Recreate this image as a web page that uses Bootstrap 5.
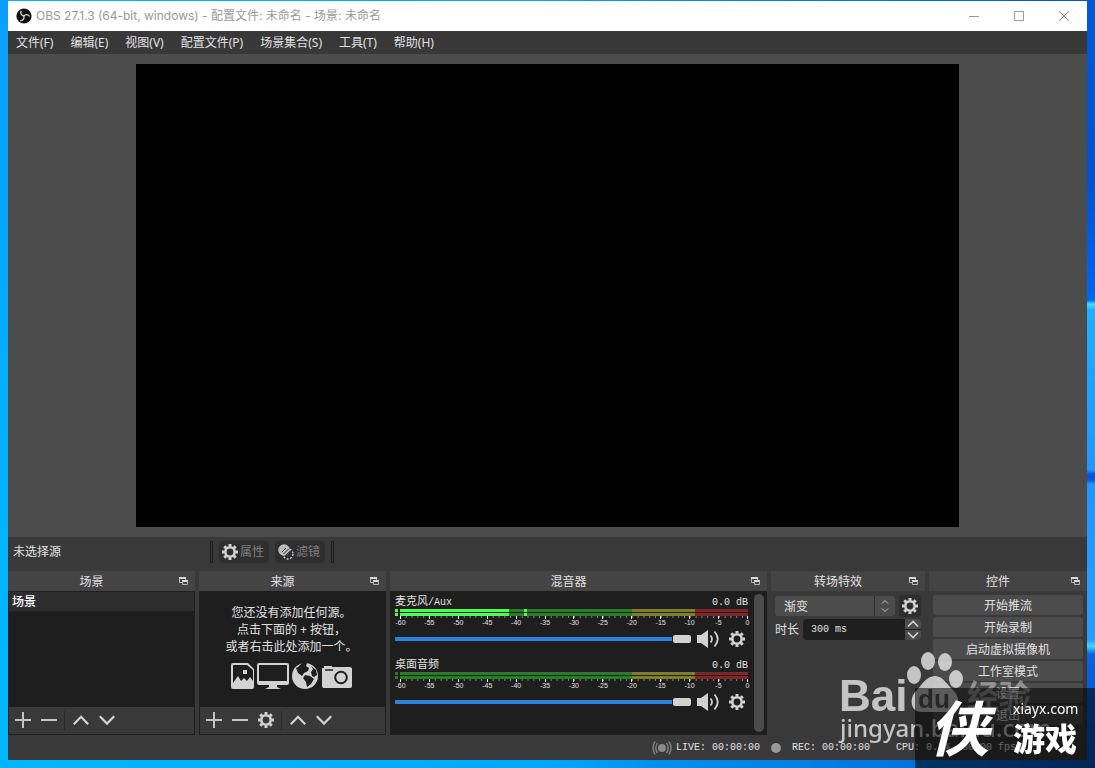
<!DOCTYPE html>
<html lang="zh-CN">
<head>
<meta charset="utf-8">
<meta name="viewport" content="width=device-width, initial-scale=1">
<title>OBS 27.1.3</title>
<link href="https://cdn.jsdelivr.net/npm/bootstrap@5.3.0/dist/css/bootstrap.min.css" rel="stylesheet">
<style>
:root{--panel:#3a393a;--dark:#1f1e1f;--btn:#4c4c4c;--ink:#e1e0e1;--icon:#d2d2d2}
body{font:12px/16px "Noto Sans","Noto Sans CJK SC",sans-serif;color:var(--ink);
 background:
  linear-gradient(#0058d2 0,#0053d0 180px,#0064f5 300px,#40e0ff 304px,#1faeff 310px,#2196ff 470px,#0a55d8 474px,#0a55d8 480px,#1f96ff 484px,#2a9cff 640px,#40d8ff 646px,#0a62e0 654px,#0053c8 100%) right/8px 100% no-repeat,
  linear-gradient(#0a9df8,#00b4ff 70%,#00b7ff) left/8px 100% no-repeat,
  linear-gradient(90deg,#00b7ff,#00a8fb 50%,#0090ee 60%,#0070dd 85%,#0057c4);
 padding:1px 8px 8px}
svg{display:block;fill:none}
button,input,select{font:inherit;color:inherit}
.mono{font-family:"Liberation Mono","Noto Sans CJK SC",monospace;font-size:10px}
.titlebar{height:30px;color:#999;background:#fff}
.title-text{font-family:Inter,"Noto Sans CJK SC",sans-serif;line-height:18px}
.menus{height:23px;background:#393839;gap:1px}
.menus a{color:var(--ink);text-decoration:none;padding:0 8px}
.winbtn{width:45px;height:30px;border:0;background:none;color:#999}
.winbtn svg{margin:0 auto}
.preview{background:var(--btn);padding:10px;min-height:0}
.canvas16{aspect-ratio:16/9;background:#000}
.lower{background:var(--panel)}
.ctx{height:34px;padding:4px 0 8px;gap:6px}
.ctx-name{width:194px;padding-left:5px;line-height:18px}
.grip{width:3px;height:22px;border:1px solid #1f1e1f}
.toolbtn{width:50px;height:22px;border:0;border-radius:4px;background:#2f2e2f;color:#7f7f7f;padding:0 5px 0 3px}
.docks{display:grid;grid-template-columns:187fr 187fr 377fr 154fr 158fr;gap:4px;height:164px}
.dock-head{height:20px;background:#454445;position:relative;text-align:center;line-height:22px;padding-right:20px}
.float-btn{border:0;background:none;padding:0;position:absolute;right:7px;top:6px}
.dock-list{background:var(--dark);border:1px solid var(--dark)}
.sel-row{height:19px;padding:1px 3px;background:#2f2e2f;line-height:18px;font-weight:500;color:#fff}
.tools{height:27px;padding:0 1px;background:var(--panel)}
.tools button{width:26px;height:26px;border:0;background:none;padding:0 0 1px;display:grid;place-items:center}
.rule{width:1px;height:19px;background:#2a292a;margin:0 3px 0 2px}
.hint{line-height:17px;padding:12px 2px 0 0;height:115px}
.hint svg{margin:7px auto 0}
.mixer{background:var(--dark);padding:3px 3px 3px 5px;gap:6px}
.strip{height:56px;margin-bottom:7px}
.strip-name{height:15px;line-height:17px}
.cjk11{font-size:11px}
.meter{height:3px;gap:2px}
.meter + .meter{margin-top:1px}
.meter i{width:3px;background:#267f26}
.meter b{flex:1;position:relative;background:linear-gradient(90deg,#267f26 66.7%,#7f7f26 66.7% 84.8%,#7f2626 84.8%)}
.meter u{position:absolute;height:3px;background:#4cff4c}
.meter.live i{background:#4cff4c}
.scale{height:12px;margin-left:5px;font:7px/8px "Liberation Sans",sans-serif;background:linear-gradient(90deg,#888 1px,transparent 1px) 0 0/calc(100%/60) 2px repeat-x}
.scale span{width:1px;display:flex;flex-direction:column;align-items:center;white-space:nowrap}
.scale span::before{content:"";width:1px;height:3px;flex:none;background:#fff}
.fader{height:22px}
.spk{margin-left:6px}
.cog{margin:0 3px 0 10px}
.vol{-webkit-appearance:none;appearance:none;flex:1;min-width:0;height:10px;margin:0;background:linear-gradient(#2a82da,#2a82da) 0 3px/calc(100% - 19px) 4px no-repeat}
.vol::-webkit-slider-thumb{-webkit-appearance:none;width:18px;height:8px;border-radius:2px;background:var(--icon)}
.iconbtn{border:0;padding:0;background:none}
.scroller{width:10px;border-radius:5px;background:#4c4c4c}
.pane{padding:4px}
.combo{position:relative;height:20px}
.combo select{appearance:none;width:100%;height:20px;border:0;border-radius:3px;background:var(--btn);padding:1px 9px 0}
.combo svg{position:absolute;right:0;top:0;pointer-events:none}
.gearbox{width:22px;height:22px;border-radius:4px;background:#2f2e2f;display:grid;place-items:center}
.duration{margin-top:2px;line-height:20px}
.spin{height:21px;background:var(--dark);border-radius:4px;overflow:hidden}
.spin input{min-width:0;width:10px;flex:1;border:0;background:none;padding:0 8px}
.spin button{width:16px;height:10px;border:0;padding:0;background:var(--btn)}
.spin svg{margin:0 auto}
.ctls{gap:2px}
.ctl{height:20px;border:0;border-radius:3px;background:var(--btn);padding:1px 0 0;line-height:20px;width:100%}
.status{height:25px;padding:1px 71px 0 0}
.cpu{margin-left:26px}
.marks{position:fixed;right:0;bottom:0;pointer-events:none}
</style>
</head>
<body class="vh-100 d-flex flex-column overflow-hidden">
<svg class="d-none">
 <symbol id="gear" viewBox="0 0 16 16"><circle cx="8" cy="8" r="4.7" stroke="#d2d2d2" stroke-width="2.6"/><path stroke="#d2d2d2" stroke-width="3" d="M8 0v2.6M8 13.4V16M0 8h2.6M13.4 8H16M2.3 2.3l1.9 1.9M11.8 11.8l1.9 1.9M2.3 13.7l1.9-1.9M11.8 4.2l1.900-1.900"/></symbol>
 <symbol id="plus" viewBox="0 0 16 16"><path stroke="#c4c4c4" stroke-width="2" d="M8 0v16M0 8h16"/></symbol>
 <symbol id="minus" viewBox="0 0 16 16"><path stroke="#c4c4c4" stroke-width="2" d="M0 8h16"/></symbol>
 <symbol id="up" viewBox="0 0 16 16"><path stroke="#d2d2d2" stroke-width="2.2" d="M.8 12.2 8 4.8l7.2 7.4"/></symbol>
 <symbol id="down" viewBox="0 0 16 16"><path stroke="#d2d2d2" stroke-width="2.2" d="M.8 4.2 8 11.6l7.2-7.4"/></symbol>
 <symbol id="float" viewBox="0 0 9 9"><path stroke="#b8b8b8" d="M3 5.500H.5V1M6.500 1v2"/><path fill="#d8d8d8" d="M0 0h7v2H0zM3 3h6v2H3z"/><path stroke="#b8b8b8" d="M3.500 4v3.500h5V4"/></symbol>
 <symbol id="speaker" viewBox="0 0 22 18"><path fill="#d2d2d2" d="M0 5h4l7-5v18l-7-5H0z"/><path stroke="#d2d2d2" stroke-width="1.800" d="M13.500 5.500q3 3.500 0 7M17.500 1.500q6.500 7.500 0 15"/></symbol>
</svg>

<header class="titlebar d-flex align-items-center">
 <svg class="ms-2" width="16" height="16" viewBox="0 0 16 16"><circle cx="8" cy="8" r="7.600" fill="#111"/><g stroke="#ddd" stroke-width="1.300"><path d="M7.800 8C5 7.500 4.200 5 5.200 2.700"/><path d="M7.800 8c1.800-2.200 4.600-1.700 5.800.5"/><path d="M7.800 8c1 2.800-1 4.800-3.500 4.700"/></g></svg>
 <span class="title-text ms-1">OBS 27.1.3 (64-bit, windows) - 配置文件: 未命名 - 场景: 未命名</span>
 <div class="ms-auto d-flex">
  <button class="winbtn" aria-label="最小化"><svg width="11" height="11"><path stroke="#999" d="M0 5.500h10"/></svg></button>
  <button class="winbtn" aria-label="最大化"><svg width="11" height="11"><path stroke="#999" d="M.5.5h9v9h-9z"/></svg></button>
  <button class="winbtn" aria-label="关闭"><svg width="11" height="11"><path stroke="#888" d="M0 0l10 10M10 0 0 10"/></svg></button>
 </div>
</header>
<nav class="menus d-flex align-items-center">
 <a href="#">文件(F)</a><a href="#">编辑(E)</a><a href="#">视图(V)</a><a href="#">配置文件(P)</a><a href="#">场景集合(S)</a><a href="#">工具(T)</a><a href="#">帮助(H)</a>
</nav>
<main class="preview flex-grow-1 d-flex justify-content-center"><div class="canvas16"></div></main>

<div class="lower">
<section class="ctx d-flex align-items-center">
 <div class="d-flex align-items-center"><span class="ctx-name me-1">未选择源</span><span class="grip ms-1 me-0"></span></div>
 <button class="toolbtn d-flex align-items-center justify-content-between"><svg width="16" height="16"><use href="#gear"/></svg>属性</button>
 <button class="toolbtn d-flex align-items-center justify-content-between"><svg width="16" height="16" viewBox="0 0 16 16"><circle cx="6" cy="6" r="5.800" fill="#bbb"/><circle cx="10" cy="10" r="5" stroke="#ccc" stroke-width="1.400" stroke-dasharray="2 1.500"/><path stroke="#333" d="M4 8l4-4M5.500 10l5-5M7.500 11.500l4-4"/></svg>滤镜</button>
 <span class="grip"></span>
</section>
<section class="docks">
 <div class="d-flex flex-column">
  <div class="dock-head">场景<button class="float-btn" aria-label="浮动"><svg width="9" height="9"><use href="#float"/></svg></button></div>
  <div class="dock-list flex-grow-1 d-flex flex-column"><div class="sel-row">场景</div>
   <div class="tools d-flex align-items-center mt-auto"><button aria-label="添加"><svg width="16" height="16"><use href="#plus"/></svg></button><button aria-label="删除"><svg width="16" height="16"><use href="#minus"/></svg></button><span class="rule"></span><button aria-label="上移"><svg width="16" height="16"><use href="#up"/></svg></button><button aria-label="下移"><svg width="16" height="16"><use href="#down"/></svg></button></div></div>
 </div>
 <div class="d-flex flex-column">
  <div class="dock-head">来源<button class="float-btn" aria-label="浮动"><svg width="9" height="9"><use href="#float"/></svg></button></div>
  <div class="dock-list flex-grow-1 d-flex flex-column">
   <div class="hint text-center">您还没有添加任何源。<br>点击下面的 + 按钮，<br>或者右击此处添加一个。
    <svg width="121" height="28" viewBox="0 0 121 28"><g fill="#d2d2d2"><path fill-rule="evenodd" d="M2 1h15l6 6v18q0 2-2 2H2q-2 0-2-2V3q0-2 2-2zm0 2v18l5-7 3 5 3-3 3 3 3-4 3 4V8l-6-5zm10 5h4v4h-4z"/><path fill-rule="evenodd" d="M28 1h28q2 0 2 2v18q0 2-2 2H46v2l4 2H34l4-2v-2H28q-2 0-2-2V3q0-2 2-2zm0 2v16h28V3z"/><circle cx="74" cy="14" r="13"/><path d="M91 6h2V4h8v1h18q2 0 2 2v17q0 2-2 2H93q-2 0-2-2z"/></g><circle cx="110" cy="15.500" r="5.800" stroke="#1f1e1f" stroke-width="2"/><path stroke="#1f1e1f" stroke-width="1.500" d="M94 8h8"/><path fill="#1f1e1f" d="M67 5l4-4 5 0-1 3 3 2-1 3-4 2-2 3-4-3-2-5zM74 13l5 1 4 3-3 5-4 3-1-5-3-4zM80 4l5 4 1 5-3 2-2-1-1-4 2-3z"/></svg></div>
   <div class="tools d-flex align-items-center mt-auto"><button aria-label="添加"><svg width="16" height="16"><use href="#plus"/></svg></button><button aria-label="删除"><svg width="16" height="16"><use href="#minus"/></svg></button><button aria-label="属性"><svg width="16" height="16"><use href="#gear"/></svg></button><span class="rule"></span><button aria-label="上移"><svg width="16" height="16"><use href="#up"/></svg></button><button aria-label="下移"><svg width="16" height="16"><use href="#down"/></svg></button></div></div>
 </div>
 <div class="d-flex flex-column">
  <div class="dock-head">混音器<button class="float-btn" aria-label="浮动"><svg width="9" height="9"><use href="#float"/></svg></button></div>
  <div class="mixer d-flex flex-grow-1"><div class="flex-grow-1">
   <div class="strip"><div class="strip-name mono d-flex justify-content-between"><label for="aux"><span class="cjk11">麦克风</span>/Aux</label><span>0.0 dB</span></div>
    <div class="meter live d-flex"><i></i><b><u style="width:31.3%"></u><u style="left:35.6%;width:3px"></u></b></div><div class="meter live d-flex"><i></i><b><u style="width:31.3%"></u><u style="left:35.6%;width:3px"></u></b></div>
    <div class="scale d-flex justify-content-between"><span>-60</span><span>-55</span><span>-50</span><span>-45</span><span>-40</span><span>-35</span><span>-30</span><span>-25</span><span>-20</span><span>-15</span><span>-10</span><span>-5</span><span>0</span></div>
    <div class="fader d-flex align-items-center"><input id="aux" class="vol" type="range" value="100"><button class="iconbtn spk" aria-label="静音"><svg width="22" height="18"><use href="#speaker"/></svg></button><button class="iconbtn cog" aria-label="设置"><svg width="16" height="16"><use href="#gear"/></svg></button></div></div>
   <div class="strip"><div class="strip-name mono d-flex justify-content-between"><label for="desk" class="cjk11">桌面音频</label><span>0.0 dB</span></div>
    <div class="meter d-flex"><i></i><b></b></div><div class="meter d-flex"><i></i><b></b></div>
    <div class="scale d-flex justify-content-between"><span>-60</span><span>-55</span><span>-50</span><span>-45</span><span>-40</span><span>-35</span><span>-30</span><span>-25</span><span>-20</span><span>-15</span><span>-10</span><span>-5</span><span>0</span></div>
    <div class="fader d-flex align-items-center"><input id="desk" class="vol" type="range" value="100"><button class="iconbtn spk" aria-label="静音"><svg width="22" height="18"><use href="#speaker"/></svg></button><button class="iconbtn cog" aria-label="设置"><svg width="16" height="16"><use href="#gear"/></svg></button></div></div>
  </div><div class="scroller"></div></div>
 </div>
 <div class="d-flex flex-column">
  <div class="dock-head">转场特效<button class="float-btn" aria-label="浮动"><svg width="9" height="9"><use href="#float"/></svg></button></div>
  <div class="pane">
   <div class="d-flex align-items-center gap-1"><div class="combo flex-grow-1"><select aria-label="转场"><option>渐变</option></select><svg width="21" height="20"><path stroke="#2f2e2f" d="M.5 0v20"/><path stroke="#c4c4c4" d="M8 7.500l3-3 3 3M8 12.500l3 3 3-3"/></svg></div><button class="iconbtn gearbox" aria-label="转场设置"><svg width="16" height="16"><use href="#gear"/></svg></button></div>
   <div class="duration d-flex align-items-center gap-1"><label for="dur">时长</label><div class="spin d-flex flex-grow-1"><input id="dur" class="mono" value="300 ms"><div class="d-flex flex-column justify-content-between"><button aria-label="增加"><svg width="12" height="10"><path stroke="#d2d2d2" stroke-width="1.600" d="M1 7.500l5-5 5 5"/></svg></button><button aria-label="减少"><svg width="12" height="10"><path stroke="#d2d2d2" stroke-width="1.600" d="M1 2.500l5 5 5-5"/></svg></button></div></div></div>
  </div>
 </div>
 <div class="d-flex flex-column">
  <div class="dock-head">控件<button class="float-btn" aria-label="浮动"><svg width="9" height="9"><use href="#float"/></svg></button></div>
  <div class="pane d-grid ctls"><button class="ctl">开始推流</button><button class="ctl">开始录制</button><button class="ctl">启动虚拟摄像机</button><button class="ctl">工作室模式</button><button class="ctl">设置</button><button class="ctl">退出</button></div>
 </div>
</section>
<footer class="status mono d-flex align-items-center justify-content-end">
 <svg width="20" height="16" viewBox="0 0 20 16"><circle cx="10" cy="8" r="4" fill="#8a8a8a"/><path stroke="#8a8a8a" stroke-width="1.300" d="M5.500 3q-3.500 5 0 10M14.500 3q3.500 5 0 10M3 1.500q-4 6.500 0 13M17 1.500q4 6.500 0 13"/></svg>
 <span class="ms-1">LIVE: 00:00:00</span>
 <svg class="mx-2" width="16" height="12"><circle cx="8" cy="6" r="5" fill="#999"/></svg>
 <span>REC: 00:00:00</span><span class="cpu">CPU: 0.8%, 30.00 fps</span>
</footer>
</div>

<svg class="marks" width="265" height="123" viewBox="0 0 265 123">
 <g fill="#fff" fill-opacity=".7" font-family="Noto Sans,Noto Sans CJK SC,sans-serif">
  <g font-weight="700"><text x="9" y="66" font-family="Liberation Sans" font-size="44">Bai</text><text x="137" y="63" font-family="Noto Sans CJK SC" font-size="32" fill-opacity=".4">经验</text></g>
  <ellipse cx="84" cy="30" rx="7" ry="9"/><ellipse cx="98" cy="16" rx="7" ry="9"/><ellipse cx="115" cy="17" rx="7" ry="9"/><ellipse cx="126" cy="34" rx="7" ry="9"/>
  <path d="M105 31c8 0 12 9 18 14 8 7 7 22-5 22H92c-12 0-13-14-6-21 6-6 10-15 19-15z"/>
  <text x="10" y="92" font-size="24" font-weight="500">jingyan.baidu.com</text>
 </g>
 <text x="88" y="63" font-family="Liberation Sans" font-weight="700" font-size="26" fill="#555">du</text>
 <path d="M85 43h180v80H85z" fill="#000" fill-opacity=".55"/>
 <g fill="#fff"><text x="99" y="106" font-family="Noto Sans CJK SC" font-weight="700" font-style="italic" font-size="60">侠</text><text x="183" y="69" font-family="Noto Sans,sans-serif" font-size="14">xiayx.com</text><text x="183" y="106" font-family="Noto Sans CJK SC" font-weight="900" font-size="32">游戏</text></g>
</svg>
<script src="https://cdn.jsdelivr.net/npm/bootstrap@5.3.0/dist/js/bootstrap.bundle.min.js"></script>
</body>
</html>
